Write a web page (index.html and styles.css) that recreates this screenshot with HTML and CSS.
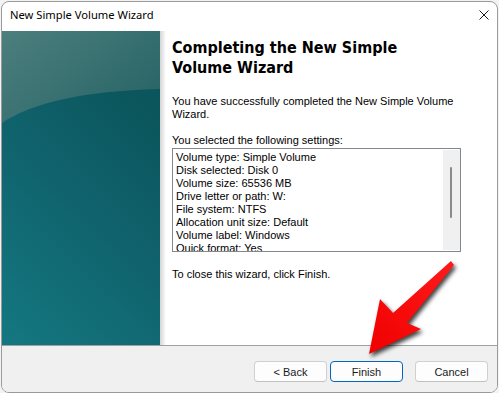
FILE: index.html
```html
<!DOCTYPE html>
<html lang="en">
<head>
  <meta charset="UTF-8">
  <meta name="viewport" content="width=device-width, initial-scale=1.0">
  <title>New Simple Volume Wizard</title>
  <link rel="stylesheet" href="styles.css">
</head>
<body>
  <div class="window">
    <div class="titlebar">
      <span class="title">New Simple Volume Wizard</span>
      <svg class="close" width="10" height="10" viewBox="0 0 10 10">
        <path d="M0.5 0.5 L9.5 9.5 M9.5 0.5 L0.5 9.5" stroke="#1b1b1b" stroke-width="1" fill="none"/>
      </svg>
    </div>
    <div class="main">
      <div class="banner">
        <svg width="158" height="314" viewBox="0 0 158 314">
          <defs>
            <linearGradient id="deep" x1="0" y1="1" x2="0.5" y2="0">
              <stop offset="0" stop-color="#147881"/>
              <stop offset="0.55" stop-color="#10636d"/>
              <stop offset="1" stop-color="#0b555c"/>
            </linearGradient>
            <linearGradient id="sky" x1="0" y1="0" x2="1" y2="0.7">
              <stop offset="0" stop-color="#4c7f7e"/>
              <stop offset="1" stop-color="#2a6567"/>
            </linearGradient>
          </defs>
          <rect width="158" height="314" fill="url(#deep)"/>
          <path d="M0 92 C30 72 80 60 158 58 V0 H0 Z" fill="url(#sky)"/>
        </svg>
      </div>
      <div class="content">
        <h1>Completing the New Simple Volume Wizard</h1>
        <p class="intro">You have successfully completed the New Simple Volume Wizard.</p>
        <p class="label">You selected the following settings:</p>
        <div class="listbox">
          <div class="items">
            <div>Volume type: Simple Volume</div>
            <div>Disk selected: Disk 0</div>
            <div>Volume size: 65536 MB</div>
            <div>Drive letter or path: W:</div>
            <div>File system: NTFS</div>
            <div>Allocation unit size: Default</div>
            <div>Volume label: Windows</div>
            <div>Quick format: Yes</div>
          </div>
          <div class="scrollbar"><div class="thumb"></div></div>
        </div>
        <p class="hint">To close this wizard, click Finish.</p>
      </div>
    </div>
    <div class="footer">
      <button class="btn">&lt; Back</button>
      <button class="btn primary">Finish</button>
      <button class="btn cancel">Cancel</button>
    </div>
  </div>
  <svg class="arrow" width="499" height="393" viewBox="0 0 499 393">
    <defs>
      <linearGradient id="red" x1="1" y1="0" x2="0" y2="1">
        <stop offset="0" stop-color="#ff1a1a"/>
        <stop offset="1" stop-color="#f00000"/>
      </linearGradient>
    </defs>
    <polygon points="369,354 380,299 393,313 451,261 454,265 407,323 421,329" fill="url(#red)"/>
  </svg>
</body>
</html>
```

FILE: styles.css
```css
body {
  margin: 0;
  background: #f3f3f3;
  font-family: 'Liberation Sans', Arial, sans-serif;
  position: relative;
  overflow: hidden;
}

.window {
  margin: 1px 0 0 1px;
  width: 497px;
  height: 392px;
  box-sizing: border-box;
  border: 1px solid #9a9a9a;
  border-radius: 8px;
  background: #fff;
  overflow: hidden;
  display: flex;
  flex-direction: column;
}

.titlebar {
  height: 29px;
  flex: none;
  display: flex;
  align-items: flex-start;
  padding: 5px 8px 0 8px;
  box-sizing: border-box;
}

.title {
  font-family: 'Noto Sans', sans-serif;
  font-size: 11.2px;
  line-height: 16px;
  color: #000;
}

.close {
  margin-left: auto;
  margin-top: 3px;
}

.main {
  height: 314px;
  flex: none;
  display: flex;
}

.banner {
  width: 158px;
  flex: none;
}

.banner svg {
  display: block;
}

.content {
  flex: 1;
  padding: 7px 36px 0 12px;
  background: linear-gradient(to right, #d4d4d4, #ffffff 6px) no-repeat;
  font-size: 11px;
  line-height: 13px;
  color: #000;
}

h1 {
  margin: 0;
  font-family: 'DejaVu Sans Condensed', 'DejaVu Sans', sans-serif;
  font-stretch: condensed;
  font-weight: bold;
  font-size: 16px;
  line-height: 20px;
}

p {
  margin: 0;
}

.intro {
  margin-top: 17px;
}

.label {
  margin-top: 13px;
}

.listbox {
  margin-top: 1px;
  height: 104px;
  box-sizing: border-box;
  border: 1px solid #828790;
  display: flex;
}

.items {
  flex: 1;
  padding: 2px 0 0 3px;
  overflow: hidden;
  white-space: nowrap;
}

.scrollbar {
  width: 17px;
  margin: 1px 0;
  padding-top: 17px;
  box-sizing: border-box;
  background: #f0f0f0;
}

.thumb {
  width: 2px;
  height: 51px;
  margin-left: 7px;
  border-radius: 1px;
  background: #8a8a8a;
}

.hint {
  margin-top: 16px;
}

.footer {
  flex: 1;
  border-top: 1px solid #a0a0a0;
  background: #f0f0f0;
  display: flex;
  justify-content: flex-end;
  align-items: flex-start;
  padding: 15px 9px 0 0;
}

.btn {
  width: 73px;
  height: 21px;
  margin: 0;
  padding: 0;
  border: 1px solid #d0d0d0;
  border-bottom-color: #c0c0c0;
  border-radius: 4px;
  background: #fdfdfd;
  font-family: 'Liberation Sans', Arial, sans-serif;
  font-size: 11px;
  color: #1b1b1b;
}

.primary {
  margin-left: 3px;
  border-color: #0067c0;
}

.cancel {
  margin-left: 12px;
}

.arrow {
  position: absolute;
  left: 0;
  top: 0;
  pointer-events: none;
  filter: drop-shadow(2px 3px 2px rgba(0, 0, 0, 0.75));
}
```
